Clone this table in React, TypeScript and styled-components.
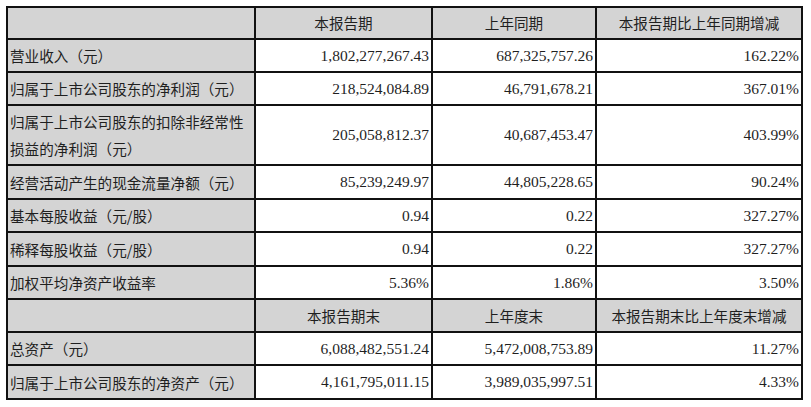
import React from "react";
import styled, { createGlobalStyle } from "styled-components";

const Global = createGlobalStyle`
  html, body { margin: 0; padding: 0; background: #ffffff; }
  body { font-family: "Noto Sans CJK SC", "Liberation Sans", sans-serif; }
`;

const Page = styled.div`
  padding: 6px 0 0 6px;
`;

const Grid = styled.div`
  display: grid;
  grid-template-columns: 248px 177px 164px 206px;
  width: max-content;
  border-left: 2px solid #111;
  border-top: 2px solid #111;
  color: #222;
`;

const Cell = styled.div<{ $h: number; $kind: "label" | "head" | "num" }>`
  box-sizing: border-box;
  height: ${(p) => p.$h}px;
  border-right: 2px solid #111;
  border-bottom: 2px solid #111;
  background: ${(p) => (p.$kind === "num" ? "#ffffff" : "#d4d4d4")};
  display: flex;
  align-items: center;
  justify-content: ${(p) =>
    p.$kind === "num" ? "flex-end" : p.$kind === "head" ? "center" : "flex-start"};
  padding: ${(p) => (p.$kind === "num" ? "0 2px 0 0" : p.$kind === "label" ? "0 0 0 2px" : "0")};
  font-family: ${(p) =>
    p.$kind === "num"
      ? `"Liberation Serif", "Noto Sans CJK SC", serif`
      : `"Noto Sans CJK SC", "Liberation Sans", sans-serif`};
  font-size: ${(p) => (p.$kind === "num" ? "15.5px" : "14.6px")};
  line-height: ${(p) => (p.$kind === "label" ? "27px" : "20px")};
  white-space: nowrap;
  color: #1f1f1f;
`;

type Row = { label: React.ReactNode; a: string; b: string; c: string; h: number };

const head1 = ["本报告期", "上年同期", "本报告期比上年同期增减"];
const head2 = ["本报告期末", "上年度末", "本报告期末比上年度末增减"];

const rows1: Row[] = [
  { label: "营业收入（元）", a: "1,802,277,267.43", b: "687,325,757.26", c: "162.22%", h: 33 },
  { label: "归属于上市公司股东的净利润（元）", a: "218,524,084.89", b: "46,791,678.21", c: "367.01%", h: 33 },
  {
    label: (
      <span>
        归属于上市公司股东的扣除非经常性
        <br />
        损益的净利润（元）
      </span>
    ),
    a: "205,058,812.37",
    b: "40,687,453.47",
    c: "403.99%",
    h: 60,
  },
  { label: "经营活动产生的现金流量净额（元）", a: "85,239,249.97", b: "44,805,228.65", c: "90.24%", h: 34 },
  { label: "基本每股收益（元/股）", a: "0.94", b: "0.22", c: "327.27%", h: 33 },
  { label: "稀释每股收益（元/股）", a: "0.94", b: "0.22", c: "327.27%", h: 34 },
  { label: "加权平均净资产收益率", a: "5.36%", b: "1.86%", c: "3.50%", h: 33 },
];

const rows2: Row[] = [
  { label: "总资产（元）", a: "6,088,482,551.24", b: "5,472,008,753.89", c: "11.27%", h: 33 },
  { label: "归属于上市公司股东的净资产（元）", a: "4,161,795,011.15", b: "3,989,035,997.51", c: "4.33%", h: 34 },
];

const Header: React.FC<{ titles: string[]; h: number }> = ({ titles, h }) => (
  <>
    <Cell $h={h} $kind="head" />
    {titles.map((t) => (
      <Cell key={t} $h={h} $kind="head">
        {t}
      </Cell>
    ))}
  </>
);

const DataRows: React.FC<{ rows: Row[] }> = ({ rows }) => (
  <>
    {rows.map((r, i) => (
      <React.Fragment key={i}>
        <Cell $h={r.h} $kind="label">{r.label}</Cell>
        <Cell $h={r.h} $kind="num">{r.a}</Cell>
        <Cell $h={r.h} $kind="num">{r.b}</Cell>
        <Cell $h={r.h} $kind="num">{r.c}</Cell>
      </React.Fragment>
    ))}
  </>
);

export default function App() {
  return (
    <>
      <Global />
      <Page>
        <Grid>
          <Header titles={head1} h={32} />
          <DataRows rows={rows1} />
          <Header titles={head2} h={33} />
          <DataRows rows={rows2} />
        </Grid>
      </Page>
    </>
  );
}
